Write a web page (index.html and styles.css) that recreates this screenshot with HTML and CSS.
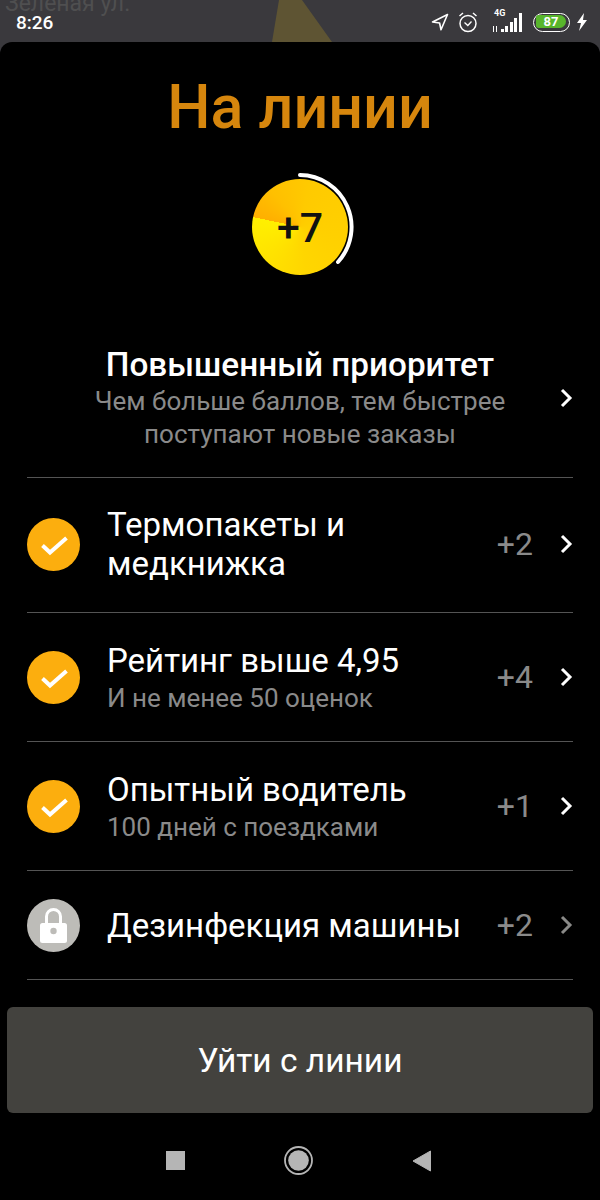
FILE: index.html
```html
<!DOCTYPE html>
<html lang="ru">
<head>
    <meta charset="UTF-8">
    <meta name="viewport" content="width=device-width, initial-scale=1.0">
    <title>На линии</title>
    <link rel="stylesheet" href="styles.css">
</head>
<body>

    <div class="status">
        <span class="map-street">Зеленая ул.</span>
        <svg class="map-arrow" width="64" height="42" viewBox="0 0 64 42"><polygon points="9,0 32,0 62,42 2,42" fill="#5e5433"/></svg>
        <span class="time">8:26</span>
        <div class="status-icons">
            <svg class="ic-nav" width="18" height="18" viewBox="0 0 18 18"><path d="M16.500 1.500 L1.500 9 L8.600 10 L10 16.800 Z" fill="none" stroke="#fff" stroke-width="1.600" stroke-linejoin="round"/></svg>
            <svg class="ic-alarm" width="20" height="22" viewBox="0 0 20 22"><circle cx="10" cy="12.500" r="8" fill="none" stroke="#fff" stroke-width="1.500"/><path d="M6.500 11.500 L9.800 14.500 L13.500 10.500" fill="none" stroke="#fff" stroke-width="1.300"/><path d="M1.500 5 L5 2 M18.500 5 L15 2" stroke="#fff" stroke-width="1.500"/></svg>
            <div class="net">
                <span class="net-label">4G</span>
                <svg width="30" height="20" viewBox="0 0 30 20"><path d="M1.500 13v6M4.500 19v-6" stroke="#fff" stroke-width="1"/><rect x="9" y="16" width="3" height="3" fill="#fff"/><rect x="13" y="13" width="3" height="6" fill="#fff"/><rect x="18" y="9" width="3" height="10" fill="#fff"/><rect x="22" y="5" width="3" height="14" fill="#fff"/><rect x="27" y="0" width="3" height="19" fill="#fff"/></svg>
            </div>
            <div class="battery"><span class="battery-fill">87</span></div>
            <svg width="12" height="18" viewBox="0 0 12 18"><polygon points="8,0 1,10 5,10 3,18 11,7 7,7" fill="#fff"/></svg>
        </div>
    </div>

    <div class="sheet">
        <h1>На линии</h1>

        <div class="score">
            <div class="score-circle">+7</div>
            <svg class="score-arc" width="110" height="110" viewBox="0 0 110 110"><path d="M55 3 A52 52 0 0 1 93 90" fill="none" stroke="#fff" stroke-width="4" stroke-linecap="round"/></svg>
        </div>

        <div class="priority">
            <div class="priority-text">
                <div class="priority-title">Повышенный приоритет</div>
                <div class="priority-sub">Чем больше баллов, тем быстрее<br>поступают новые заказы</div>
            </div>
            <svg class="chevron" width="14" height="20" viewBox="0 0 14 20"><path d="M3 2 L11 10 L3 18" fill="none" stroke="#fff" stroke-width="3"/></svg>
        </div>

        <div class="row row-tall">
            <svg class="badge" width="53" height="53" viewBox="0 0 53 53"><circle cx="26.500" cy="26.500" r="26.500" fill="#fcae0e"/><path d="M15.500 27.500 L23 34.500 L39.500 20" fill="none" stroke="#fff" stroke-width="4"/></svg>
            <div class="row-text"><div class="row-title">Термопакеты и<br>медкнижка</div></div>
            <span class="points">+2</span>
            <svg class="chevron" width="14" height="20" viewBox="0 0 14 20"><path d="M3 2 L11 10 L3 18" fill="none" stroke="#fff" stroke-width="3"/></svg>
        </div>

        <div class="row">
            <svg class="badge" width="53" height="53" viewBox="0 0 53 53"><circle cx="26.500" cy="26.500" r="26.500" fill="#fcae0e"/><path d="M15.500 27.500 L23 34.500 L39.500 20" fill="none" stroke="#fff" stroke-width="4"/></svg>
            <div class="row-text">
                <div class="row-title">Рейтинг выше 4,95</div>
                <div class="row-sub">И не менее 50 оценок</div>
            </div>
            <span class="points">+4</span>
            <svg class="chevron" width="14" height="20" viewBox="0 0 14 20"><path d="M3 2 L11 10 L3 18" fill="none" stroke="#fff" stroke-width="3"/></svg>
        </div>

        <div class="row">
            <svg class="badge" width="53" height="53" viewBox="0 0 53 53"><circle cx="26.500" cy="26.500" r="26.500" fill="#fcae0e"/><path d="M15.500 27.500 L23 34.500 L39.500 20" fill="none" stroke="#fff" stroke-width="4"/></svg>
            <div class="row-text">
                <div class="row-title">Опытный водитель</div>
                <div class="row-sub">100 дней с поездками</div>
            </div>
            <span class="points">+1</span>
            <svg class="chevron" width="14" height="20" viewBox="0 0 14 20"><path d="M3 2 L11 10 L3 18" fill="none" stroke="#fff" stroke-width="3"/></svg>
        </div>

        <div class="row row-short">
            <svg class="badge" width="53" height="53" viewBox="0 0 53 53"><circle cx="26.500" cy="26.500" r="26.500" fill="#bdbcb8"/><path d="M19.500 24 V17.500 A7 7 0 0 1 33.500 17.500 V24" fill="none" stroke="#fff" stroke-width="3"/><rect x="13" y="24" width="27" height="20" rx="2.500" fill="#fff"/><circle cx="26.500" cy="32" r="3.200" fill="#bdbcb8"/></svg>
            <div class="row-text"><div class="row-title">Дезинфекция машины</div></div>
            <span class="points">+2</span>
            <svg class="chevron" width="14" height="20" viewBox="0 0 14 20"><path d="M3 2 L11 10 L3 18" fill="none" stroke="#8a8a88" stroke-width="3"/></svg>
        </div>

        <button class="leave">Уйти с линии</button>

        <div class="nav">
            <div class="nav-square"></div>
            <svg width="29" height="29" viewBox="0 0 29 29"><circle cx="14.500" cy="14.500" r="13.500" fill="none" stroke="#b5b5b5" stroke-width="1.800"/><circle cx="14.500" cy="14.500" r="10.300" fill="#b5b5b5"/></svg>
            <svg width="19" height="22" viewBox="0 0 19 22"><path d="M18.500 1 V21 L1 11 Z" fill="#b5b5b5" stroke="#b5b5b5" stroke-linejoin="round"/></svg>
        </div>
    </div>

</body>
</html>
```

FILE: styles.css
```css
* {
    box-sizing: border-box;
}
html, body {
    height: 100%;
}
body {
    font-family: Roboto, "Noto Sans", sans-serif;
    background-color: #3a393d;
    margin: 0;
    overflow: hidden;
    color: #ffffff;
}

/* status bar with the map showing behind it */
.status {
    position: relative;
    height: 42px;
    display: flex;
    align-items: center;
    justify-content: space-between;
    padding: 2px 12px 0 16px;
    overflow: hidden;
}
.map-street {
    position: absolute;
    left: 5px;
    top: -10px;
    font-size: 23px;
    color: #4f4f50;
}
.map-arrow {
    position: absolute;
    left: 270px;
    top: 0;
}
.time {
    position: relative;
    font-size: 19px;
    font-weight: 500;
}
.status-icons {
    position: relative;
    display: flex;
    align-items: center;
}
.ic-nav {
    margin-right: 9px;
}
.ic-alarm {
    margin-right: 14px;
}
.net {
    position: relative;
    width: 30px;
    height: 22px;
    margin-right: 11px;
}
.net svg {
    position: absolute;
    left: 0;
    bottom: 0;
}
.net-label {
    position: absolute;
    left: 2px;
    top: -3px;
    font-size: 9px;
    font-weight: 700;
}
.battery {
    width: 37px;
    height: 19px;
    margin-right: 6px;
    padding: 1.5px 2px;
    border: 1.5px solid #fff;
    border-radius: 10px;
}
.battery-fill {
    display: block;
    width: 30px;
    height: 13px;
    background-color: #58b52c;
    border-radius: 3px 7px 7px 3px;
    font-size: 13px;
    font-weight: 700;
    line-height: 13px;
    text-align: center;
}

.sheet {
    height: 1158px;
    background-color: #000;
    border-radius: 12px 12px 0 0;
    display: flex;
    flex-direction: column;
}
h1 {
    margin: 27px 0 0;
    height: 76px;
    font-size: 61px;
    font-weight: 500;
    line-height: 76px;
    text-align: center;
    color: #d6860d;
}

.score {
    position: relative;
    width: 96px;
    height: 96px;
    margin: 34px 0 0 252px;
}
.score-circle {
    width: 96px;
    height: 96px;
    border-radius: 50%;
    background: conic-gradient(from 282deg, #ffaf00 0deg, #ffc000 40deg, #ffca00 90deg, #ffd000 180deg, #ffd600 250deg, #ffe600 320deg, #fff000 360deg);
    color: #111;
    font-size: 41px;
    font-weight: 500;
    line-height: 98px;
    text-align: center;
}
.score-arc {
    position: absolute;
    left: -7px;
    top: -7px;
}

.priority {
    display: flex;
    align-items: center;
    height: 151px;
    margin: 52px 27px 0;
    padding: 0 0 8px;
    border-bottom: 1px solid #545454;
}
.priority-text {
    flex: 1;
    padding-left: 14px;
    text-align: center;
}
.priority-title {
    font-size: 33.300px;
    font-weight: 500;
    line-height: 40px;
}
.priority-sub {
    font-size: 26px;
    line-height: 33px;
    color: #8a8a8a;
}

.row {
    display: flex;
    align-items: center;
    height: 129px;
    margin: 0 27px;
    border-bottom: 1px solid #545454;
}
.row-tall {
    height: 135px;
    padding-bottom: 2px;
}
.row-short {
    height: 109px;
}
.badge {
    flex-shrink: 0;
}
.row-text {
    flex: 1;
    margin-left: 27px;
}
.row-title {
    font-size: 33px;
    line-height: 39px;
}
.row-sub {
    margin-top: 2px;
    font-size: 26px;
    line-height: 32px;
    color: #8a8a8a;
}
.points {
    margin-right: 26px;
    font-size: 32px;
    color: #8a8a8a;
}
.chevron {
    flex-shrink: 0;
}

.leave {
    flex-shrink: 0;
    height: 106px;
    margin: 27px 7px 0;
    border: none;
    border-radius: 6px;
    background-color: #43423e;
    color: #fff;
    font-family: inherit;
    font-size: 33.500px;
}
.nav {
    flex: 1;
    display: flex;
    align-items: center;
    justify-content: space-between;
    padding: 8px 169px 0 166px;
}
.nav-square {
    width: 19px;
    height: 19px;
    background-color: #b5b5b5;
}
```
